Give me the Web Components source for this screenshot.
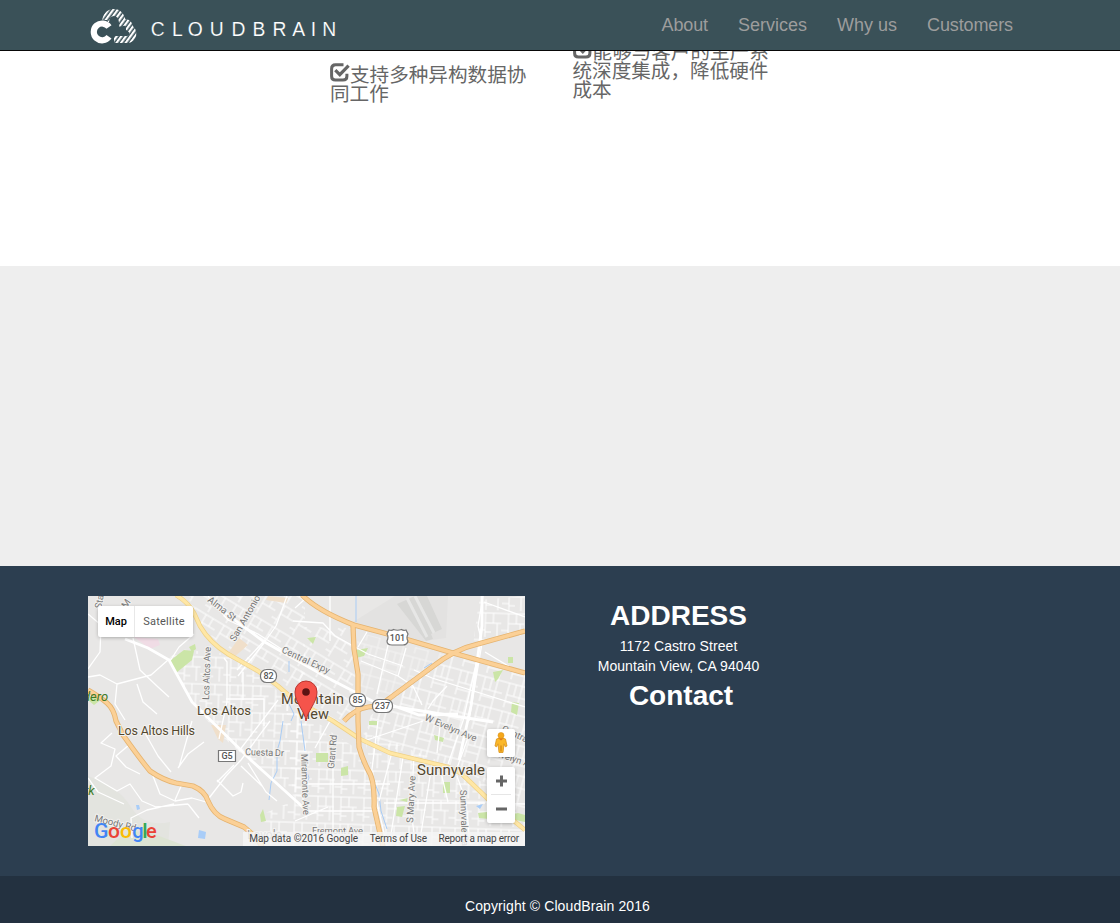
<!DOCTYPE html>
<html lang="en">
<head>
<meta charset="utf-8">
<title>CloudBrain</title>
<style>
body{margin:0;font:14px/20px "Liberation Sans","Noto Sans CJK SC",sans-serif;color:#333;background:#fff;overflow:hidden}
</style>
</head>
<body>
<cb-page></cb-page>
<script>
const define=(name,html,setup)=>customElements.define(name,class extends HTMLElement{
  connectedCallback(){
    if(this.shadowRoot)return;
    const t=document.createElement('template');t.innerHTML=html;
    const r=this.attachShadow({mode:'open'});r.append(t.content.cloneNode(true));
    if(setup)setup(r,this);
  }
});

define('cb-logo',`<style>:host{display:block;width:260px;height:50px}svg{display:block}</style>
<svg width="260" height="50" viewBox="82 0 260 50">
<defs>
<pattern id="stripes" width="3.700" height="10" patternUnits="userSpaceOnUse" patternTransform="rotate(36)"><path d="M0 0h2.200v10H0z" fill="#fff"/></pattern>
<mask id="band" maskUnits="userSpaceOnUse" x="86" y="0" width="56" height="50"><path d="M105.500 22C106 15 110 12.500 114 12.500C119 12.500 122 17 122.500 22.500C127 21.500 129.500 24 129.500 28C134.500 31 134 39.500 127 39.500H112" fill="none" stroke="#fff" stroke-width="7"/></mask>
</defs>
<path d="M86 0h56v50H86z" fill="url(#stripes)" mask="url(#band)"/>
<path d="M98 20h9v6h7v17H98z" fill="#3a5158"/>
<path d="M109 27a8.400 8.400 0 1 0 0 9.800" fill="none" stroke="#fff" stroke-width="6.200"/>
<text y="36" x="150.700 172 187.800 209.800 231.500 252.500 272.500 292.300 310.800 322.300" font-family="Liberation Sans" font-size="19.300" fill="#fff" stroke="#3a5158" stroke-width=".15">CLOUDBRAIN</text>
</svg>`);

define('cb-nav-link',`<style>:host{display:block;padding:15px;font-size:18px;line-height:20px;color:#9d9d9d}:host([tight]){letter-spacing:-.12px}</style><slot></slot>`);

define('cb-navbar',`<style>:host{display:flex;position:fixed;z-index:5;top:0;left:0;right:0;height:50px;background:#3a5158;border-bottom:1px solid #080808;justify-content:space-between;padding:0 92px 0 82px}nav{display:flex}</style>
<cb-logo></cb-logo><nav><slot></slot></nav>`);

define('cb-feature',`<style>:host{display:block;width:197px;font-size:19.6px;line-height:19px;color:#666}svg{width:20px;height:19px;vertical-align:-1px;overflow:visible}</style><svg viewBox="0 1.300 20 19"><path d="M13.500 2H5.500Q1.600 2 1.600 6V13.500Q1.600 17.400 5.500 17.400H13Q16.900 17.400 16.900 13.500V11" fill="none" stroke="#666" stroke-width="3"/><path d="M5.300 7.500l4.500 4.500 8.800-9" fill="none" stroke="#666" stroke-width="3.200"/></svg><slot></slot>`);

define('cb-features',`<style>:host{display:flex;box-sizing:border-box;height:266px;padding:41px 0 0 330px;gap:45.500px;align-items:flex-start}cb-feature:first-of-type{margin-top:23px}</style>
<cb-feature>支持多种异构数据协同工作</cb-feature><cb-feature>能够与客户的生产系统深度集成，降低硬件成本</cb-feature>`);

define('cb-band',`<style>:host{display:block;height:300px;background:#eee}</style>`);

define('cb-map-type',`<style>:host{display:flex;width:95px;height:31px;background:#fff;border-radius:2px;box-shadow:0 1px 4px -1px #0006;font:11px/31px Roboto,sans-serif;color:#565656}b{width:36px;border-right:1px solid #e8e8e8;text-align:center;color:#000;font-weight:500}span{flex:1;text-align:center;letter-spacing:.25px}</style><b>Map</b><span>Satellite</span>`);

define('cb-map-controls',`<style>:host{display:grid;gap:10px;width:28px}div{background:#fff;border-radius:2px;box-shadow:0 1px 4px -1px #0006}svg{display:block}</style>
<div><svg width="28" height="28"><path d="M9.500 10q4.500-2.500 9 0l1.500 7-1.700.8-1.300-3-1 8.700h-4l-1-8.700-1.300 3-1.700-.8z" fill="#fbb829" stroke="#d9921c" stroke-width=".8"/><circle cx="14" cy="6.500" r="3" fill="#f5a71a" stroke="#d9921c" stroke-width=".6"/><path d="M14 16.500v6" stroke="#c77b13"/><path d="M11.500 9.500l2.500 2 2.500-2z" fill="#e0761c"/></svg></div>
<div><svg width="28" height="56"><path d="M9 14h11M14.500 8.500v11M9 42h11" stroke="#666" stroke-width="3"/><path d="M4 27.500h20" stroke="#e6e6e6"/></svg></div>`);

define('cb-map',`<style>:host{display:block;position:relative;width:437px;height:250px;overflow:hidden;background:#e8e7e5}svg{display:block}cb-map-type{position:absolute;left:10px;top:10px}cb-map-controls{position:absolute;left:399px;top:133px}.legal{position:absolute;right:0;bottom:0;height:14px;display:flex;gap:11.500px;padding:0 6px;background:#f5f5f5d0;font:10px/14px Roboto,sans-serif;color:#444;white-space:nowrap}.legal span+span{letter-spacing:-.16px}</style>
<svg width="437" height="250" viewBox="0 0 437 250" font-family="Roboto,sans-serif">
<defs>
<pattern id="g1" width="23" height="27" patternUnits="userSpaceOnUse" patternTransform="rotate(2)"><path d="M0 3h23M7 3v24M15 3v10M7 13h16M0 20h7M19 13v14M7 22h6" stroke="#fff" stroke-width="1" fill="none"/></pattern>
<pattern id="g2" width="25" height="29" patternUnits="userSpaceOnUse" patternTransform="rotate(15)"><path d="M0 4h25M5 4v25M12 4v12M18 0v29M5 16h20M5 23h13" stroke="#fff" stroke-width="1" fill="none"/></pattern>
<pattern id="g3" width="21" height="24" patternUnits="userSpaceOnUse" patternTransform="rotate(31)"><path d="M0 3h21M6 3v21M14 3v9M6 12h15M0 19h6" stroke="#fff" stroke-width="1" fill="none"/></pattern>
</defs>
<path d="M0 0H437V250H0Z" fill="#e8e7e6"/>
<path d="M0 180Q30 190 43 211T82 226L80 250H0z" fill="#e3e4df"/><path d="M22 250Q42 229 66 238T98 250z" fill="#dde4d3"/>
<path d="M307 0L360 0 358 42 330 46 265 26z" fill="#e3e2e1"/>
<path d="M309 8l18-8h12l15 33-11 5 2 5-7 2z" fill="#d7d7d5"/><path d="M319 2l20 39M327 0l19 37" stroke="#e7e7e6" stroke-width="3"/>
<path d="M90 53L138 58 166 76 202 105 220 132 217 206 165 168 127 134 104 106 80 64z" fill="url(#g1)"/>
<path d="M98 0H217V103L178 75 140 55 112 30z" fill="url(#g3)"/>
<path d="M217 31L265 32 271 120 251 126 210 100z" fill="url(#g3)"/>
<path d="M269 36L363 60 300 112 270 116z" fill="url(#g2)" opacity=".5"/>
<path d="M367 58L437 78V224L408 193 374 173 290 148 275 125z" fill="url(#g2)"/>
<path d="M391 4L437 0V39L385 50z" fill="url(#g1)"/>
<path d="M275 135L367 171 408 194 437 226V250H298L286 185z" fill="url(#g1)"/>
<path d="M198 106L272 155 291 202 293 250H181L175 218 205 205z" fill="url(#g1)"/>
<g fill="#cbe5a7"><path d="M82 65q7-6 14-11l10 1-2 9-16 13zM101 51l6-3 1 5-4 3zM219 42l9-1-3 7zM268 54l12-2-4 8-8 2zM405 76l10-2-5 9-3 3zM420 61h5v6h-5zM424 106l7 1-2 12-6-3zM228 157h12v9h-12zM253 172l7-2v9l-7 1zM281 125h8v4h-8zM346 139l10 3-1 4-8-2zM355 186h7v11h-7zM309 211l8-1-3 11-6-1zM311 204l9-2-1 4zM390 217l9-1 2 7-10-1zM420 219l10-2 7 2v7l-10-2zM172 219l3-6 3 12-5 1zM0 104l6-5 8 4-8 6z"/></g>
<path d="M46 41l24 2 2 6-10 4z" fill="#f0dce5"/>
<path d="M138 60l13-18 9 7-16 14zM123 129l15 0-3 18-5-4zM180 0l20 2-2 5-20-3z" fill="#f0dfca"/>
<g fill="#a9cdf8"><path d="M48 209l3 0 1 4-3 1zM111 234l7 2-1 7-7-1zM388 210l7-2-3 5z"/></g>
<g fill="none" stroke="#a9ccf5"><path d="M195 125l-3 20-3 10 0 20-6 12-2 17M213 125l4 30M268 0v26M336 72l8-5M201 65v11M269 147l5 20 10 13 7 18 2 17 6 18M217 170l4 12-4 8M201 108l5 10-3 7"/></g>
<g fill="none" stroke="#fff" stroke-width="1.300" stroke-linejoin="round">
<path d="M0 18L13 29 12 56 0 73M45 42L52 74 70 91 81 101M80 64L63 79 29 88 12 79 0 81M29 88L27 108 37 124M49 88l6 18 14 12M106 38L91 51 82 65M136 62L139 66V106L131 143M120 0L140 24 170 38 217 68M199 0L188 30 176 47 150 80M177 44L149 74M138 103H176V130M155 76V104"/>
<path d="M24 137L13 147 27 153 23 170 7 182 29 195 42 188 54 205 68 211 100 208M41 149L28 160 38 171 52 178M57 137L70 160 83 176M90 172L100 158 116 146M91 171L104 125M65 180L72 198 87 205 104 202 118 206M87 204L94 188M0 182L10 196 36 208M100 208l11 14M44 242l-1 -20 16-8 27-6M129 184L145 200 153 196 155 187M153 170L174 190M151 155L190 104M118 206L138 180 153 164 182 125M160 167L178 196 189 205M129 186L146 169"/>
<path d="M207 12L217 3M205 25L235 27 247 40 280 58 315 70M242 0V45M230 90L222 116M279 36L270 51M300 49L289 98M318 52L310 80M273 65L310 80 325 90 334 109M326 74L344 82 437 111M395 0L390 30 394 47 381 125M396 6L437 21M397 56L437 80M390 60L375 125 360 168M359 90L345 105 340 113"/>
<path d="M245 163V250M242 125l-15 27M290 125L283 181 299 250M304 156L291 205M315 161L302 245M326 160L323 214 327 245M344 168L331 250M352 172L360 206M369 180L378 206 382 248M399 184L400 207 437 208M296 207H397M217 188H302M217 215H290M276 145L335 125M352 130l-3 27M381 139l-12 33M207 225L240 211"/>
</g>
<g fill="none" stroke="#fff" stroke-width="2.800"><path d="M37 43L60 52 81 64 104 106 165 166 217 213M120 4L175 45 240 82 290 108 340 116 405 126M290 104L331 119 370 118M394 0V30L383 110 371 164"/></g>
<g fill="none" stroke-linejoin="round">
<path d="M88-1Q100 6 106 17L112 30Q122 47 140 58L170 75 190 90 205 103 245 125 272 143 302 157 360 171 374 178 402 205 437 234" stroke="#efd187" stroke-width="4.600"/>
<path d="M88-1Q100 6 106 17L112 30Q122 47 140 58L170 75 190 90 205 103 245 125 272 143 302 157 360 171 374 178 402 205 437 234" stroke="#ffe7a5" stroke-width="3.200"/>
<path d="M214-1Q230 15 266 29L307 40 365 57 437 77M437 35L390 48Q367 53 344 71L302 102Q292 111 280 111 267 113 256 125M265 30L266 53 270 78V125L271 151Q274 162 280 174 287 184 286 211L295 251M0 94Q12 101 19 107 26 113 28 125L35 139Q52 163 62 175 75 184 88 187L105 190Q117 195 120 205 126 219 137 223L156 231Q170 242 174 251" stroke="#e5b36f" stroke-width="5.200"/>
<path d="M214-1Q230 15 266 29L307 40 365 57 437 77M437 35L390 48Q367 53 344 71L302 102Q292 111 280 111 267 113 256 125M265 30L266 53 270 78V125L271 151Q274 162 280 174 287 184 286 211L295 251M0 94Q12 101 19 107 26 113 28 125L35 139Q52 163 62 175 75 184 88 187L105 190Q117 195 120 205 126 219 137 223L156 231Q170 242 174 251" stroke="#fbd096" stroke-width="3.600"/></g>
<g fill="#777" font-size="9.500" stroke="#f3f2f0" stroke-width="2" paint-order="stroke" stroke-linejoin="round">
<text transform="translate(13 13) rotate(-78)">Sta</text><text transform="translate(34 19) rotate(-55)">n M</text>
<text transform="translate(119 5) rotate(38)">Alma St</text><text transform="translate(147 46) rotate(-60)">San Antonio Rd</text><text transform="translate(121 104) rotate(-88)" textLength="53">Los Altos Ave</text><text transform="translate(193 56) rotate(25)" textLength="52">Central Expy</text><text transform="translate(336 124) rotate(23)">W Evelyn Ave</text><text transform="translate(413 135) rotate(25)">Central</text><text transform="translate(407 160) rotate(18)">Evelyn Ave</text><text transform="translate(157 159) rotate(2)" textLength="39">Cuesta Dr</text><text transform="translate(213 158) rotate(88)" textLength="61">Miramonte Ave</text><text transform="translate(246 173) rotate(-85)" textLength="34">Grant Rd</text><text transform="translate(325 227) rotate(-87)">S Mary Ave</text><text transform="translate(372 194) rotate(88)">Sunnyvale Sara</text><text x="224" y="238" textLength="51">Fremont Ave</text><text transform="translate(6 225) rotate(14)">Moody Rd</text></g>
<g fill="#54482f" stroke="#f3f2f0" stroke-width="2" paint-order="stroke"><text x="109" y="119" font-size="13" textLength="54">Los Altos</text><text x="30" y="138.500" font-size="12.500" textLength="77">Los Altos Hills</text><text x="193" y="108" font-size="14.500" textLength="63">Mountain</text><text x="209" y="123" font-size="14.500" textLength="32">View</text><text x="329" y="179" font-size="15" textLength="68">Sunnyvale</text><text x="159" y="243" font-size="12" fill="#999">Loyola</text></g>
<g fill="#3e7b27" font-style="italic" font-size="13"><text x="-5" y="105">dero</text><text x="-4" y="199">rk</text></g>
<g fill="#fff" stroke="#777" stroke-width="1.200"><rect x="172.500" y="73.500" width="16" height="13" rx="6"/><rect x="261.500" y="97.500" width="16" height="13" rx="6"/><rect x="284.500" y="103.500" width="20" height="13" rx="6"/><path d="M301 34q3 1 4.500-.5 4 1.500 8 0 2 1.500 4.500.5l2 4q-2 4 0 7-1 4-5 4H304q-5 0-5-4 2-4 0-7z"/><path d="M130.500 154.500h17v11h-17z"/></g>
<g fill="#555" font-size="9" text-anchor="middle" font-weight="500"><text x="180.500" y="83.300">82</text><text x="269.500" y="107.300">85</text><text x="294.500" y="113.300">237</text><text x="309.500" y="45.300">101</text><text x="139" y="163.300">G5</text></g>
<path d="M218 125C217 115 207 107 207 96a11 11 0 0 1 22 0c0 11-10 19-11 29z" fill="#f5544b" stroke="#b93631"/><circle cx="218" cy="96" r="3.800" fill="#5c1313"/>
<g font-weight="500" font-size="21"><text x="6" y="242" fill="#4285f4" textLength="14.500" lengthAdjust="spacingAndGlyphs">G</text><text x="20" y="242" fill="#ea4335">o</text><text x="32" y="242" fill="#fbbc05">o</text><text x="44.300" y="242" fill="#4285f4" font-size="20">g</text><text x="54.200" y="242" fill="#34a853">l</text><text x="58" y="242" fill="#ea4335" font-size="20">e</text></g>
</svg><cb-map-type></cb-map-type><cb-map-controls></cb-map-controls><div class="legal"><span>Map data ©2016 Google</span><span>Terms of Use</span><span>Report a map error</span></div>`);

define('cb-address',`<style>:host{display:block;text-align:center;color:#fff}h2{margin:0;font-size:28px;line-height:40px}p{margin:0;letter-spacing:.07px}.contact{padding-left:5px}</style><h2>ADDRESS</h2><p>1172 Castro Street<br>Mountain View, CA 94040</p><h2 class="contact">Contact</h2>`);

define('cb-footer',`<style>:host{display:block;background:#2c3e50}.main{box-sizing:border-box;height:310px;padding:30px 0 0 88px;display:flex;gap:48px}cb-address{width:211px}.copy{box-sizing:border-box;height:47px;background:#233140;color:#fff;text-align:center;padding:20px 5px 0 0;letter-spacing:.1px}</style><div class="main"><cb-map></cb-map><cb-address></cb-address></div><div class="copy">Copyright © CloudBrain 2016</div>`);

define('cb-page',`<style>:host{display:block}</style><cb-navbar><cb-nav-link tight>About</cb-nav-link><cb-nav-link>Services</cb-nav-link><cb-nav-link>Why us</cb-nav-link><cb-nav-link tight>Customers</cb-nav-link></cb-navbar><cb-features></cb-features><cb-band></cb-band><cb-footer></cb-footer>`);
</script>
</body>
</html>
